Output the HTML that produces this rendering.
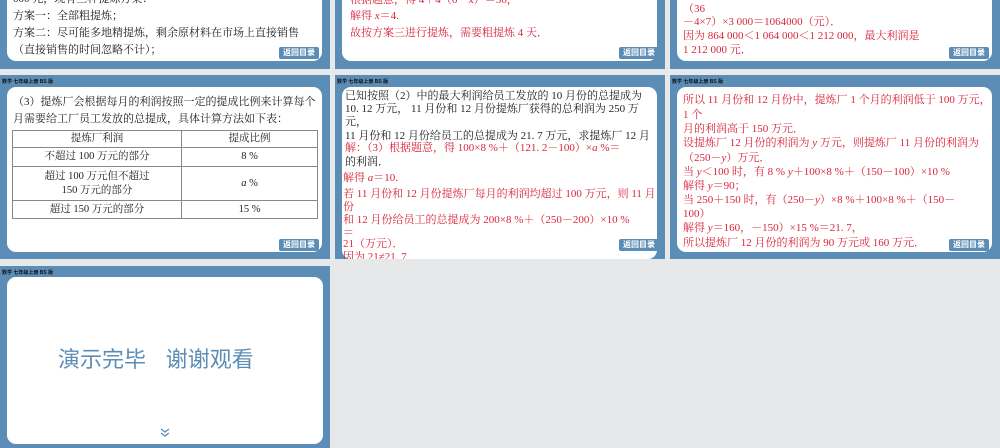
<!DOCTYPE html>
<html><head><meta charset="utf-8"><style>
*{margin:0;padding:0;box-sizing:border-box}
body{width:1000px;height:448px;background:#e7e8ea;position:relative;overflow:hidden;font-family:"Liberation Serif","Noto Serif CJK SC",serif}
.s{position:absolute;background:#5b8db6;overflow:hidden}
.p{position:absolute;background:#fff;border-radius:9px;overflow:hidden}
.h{position:absolute;left:2px;font:bold 5px "Liberation Sans","Noto Sans CJK SC",sans-serif;color:#111;white-space:nowrap}
.t{position:absolute;font-size:11px;line-height:13px;white-space:nowrap;color:#222}
.r{color:#d8263a}
.b{position:absolute;background:#5b8db6;color:#fff;font:bold 8px "Noto Sans CJK SC",sans-serif;width:40px;height:12px;line-height:12px;text-align:center;border-radius:2px}
table{border-collapse:collapse;font-size:10.5px;color:#222}
td{border:1px solid #888;text-align:center;line-height:14px}
</style></head><body>

<div class="s" style="left:0;top:0;width:330px;height:69px">
 <div class="p" style="left:7px;top:-10px;width:315px;height:71px"></div>
 <div class="t" style="left:13px;top:-7px">000 元，现有三种提炼方案：</div>
 <div class="t" style="left:13px;top:10px">方案一：全部粗提炼；</div>
 <div class="t" style="left:13px;top:27px">方案二：尽可能多地精提炼，剩余原材料在市场上直接销售</div>
 <div class="t" style="left:13px;top:44px">（直接销售的时间忽略不计）；</div>
 <div class="b" style="left:279px;top:47px">返回目录</div>
</div>
<div class="s" style="left:335px;top:0;width:330px;height:69px">
 <div class="p" style="left:7px;top:-10px;width:315px;height:71px"></div>
 <div class="t r" style="left:15px;top:-6px">根据题意，得 4＋4（6－x）＝36，</div>
 <div class="t r" style="left:15px;top:10px">解得 <i>x</i>＝4.</div>
 <div class="t r" style="left:15px;top:27px">故按方案三进行提炼，需要粗提炼 4 天．</div>
 <div class="b" style="left:284px;top:47px">返回目录</div>
</div>
<div class="s" style="left:670px;top:0;width:330px;height:69px">
 <div class="p" style="left:7px;top:-10px;width:315px;height:71px"></div>
 <div class="t r" style="left:13px;top:3px">（36</div>
 <div class="t r" style="left:13px;top:16px">－4×7）×3 000＝1064000（元）．</div>
 <div class="t r" style="left:13px;top:30px">因为 864 000＜1 064 000＜1 212 000，最大利润是</div>
 <div class="t r" style="left:13px;top:44px">1 212 000 元．</div>
 <div class="b" style="left:279px;top:47px">返回目录</div>
</div>

<div class="s" style="left:0;top:75px;width:330px;height:184px">
 <div class="h" style="top:3px">数学 七年级上册 BS 版</div>
 <div class="p" style="left:7px;top:12px;width:315px;height:165px"></div>
 <div class="t" style="left:13px;top:21px">（3）提炼厂会根据每月的利润按照一定的提成比例来计算每个</div>
 <div class="t" style="left:13px;top:38px">月需要给工厂员工发放的总提成，具体计算方法如下表：</div>
 <table style="position:absolute;left:12px;top:55px;width:306px">
  <tr><td style="width:169px;height:17px">提炼厂利润</td><td>提成比例</td></tr>
  <tr><td style="height:19px">不超过 100 万元的部分</td><td>8 %</td></tr>
  <tr><td style="height:34px">超过 100 万元但不超过<br>150 万元的部分</td><td><i>a</i> %</td></tr>
  <tr><td style="height:18px">超过 150 万元的部分</td><td>15 %</td></tr>
 </table>
 <div class="b" style="left:279px;top:164px">返回目录</div>
</div>
<div class="s" style="left:335px;top:75px;width:330px;height:184px">
 <div class="h" style="top:3px">数学 七年级上册 BS 版</div>
 <div class="p" style="left:7px;top:12px;width:315px;height:172px"></div>
 <div class="t" style="left:10px;top:15px">已知按照（2）中的最大利润给员工发放的 10 月份的总提成为</div>
 <div class="t" style="left:10px;top:28px">10. 12 万元， 11 月份和 12 月份提炼厂获得的总利润为 250 万</div>
 <div class="t" style="left:10px;top:41px">元，</div>
 <div class="t" style="left:10px;top:55px">11 月份和 12 月份给员工的总提成为 21. 7 万元，求提炼厂 12 月</div>
 <div class="t r" style="left:10px;top:67px">解：（3）根据题意，得 100×8 %＋（121. 2－100）×<i>a</i> %＝</div>
 <div class="t" style="left:10px;top:81px">的利润．</div>
 <div class="t r" style="left:8px;top:97px">解得 <i>a</i>＝10.</div>
 <div class="t r" style="left:8px;top:113px">若 11 月份和 12 月份提炼厂每月的利润均超过 100 万元，则 11 月</div>
 <div class="t r" style="left:8px;top:126px">份</div>
 <div class="t r" style="left:8px;top:139px">和 12 月份给员工的总提成为 200×8 %＋（250－200）×10 %</div>
 <div class="t r" style="left:8px;top:152px">＝</div>
 <div class="t r" style="left:8px;top:163px">21（万元）．</div>
 <div class="t r" style="left:8px;top:176px">因为 21≠21. 7，</div>
 <div class="b" style="left:284px;top:164px">返回目录</div>
</div>
<div class="s" style="left:670px;top:75px;width:330px;height:184px">
 <div class="h" style="top:3px">数学 七年级上册 BS 版</div>
 <div class="p" style="left:7px;top:12px;width:315px;height:165px"></div>
 <div class="t r" style="left:13px;top:19px">所以 11 月份和 12 月份中，提炼厂 1 个月的利润低于 100 万元，</div>
 <div class="t r" style="left:13px;top:34px">1 个</div>
 <div class="t r" style="left:13px;top:48px">月的利润高于 150 万元．</div>
 <div class="t r" style="left:13px;top:62px">设提炼厂 12 月份的利润为 <i>y</i> 万元，则提炼厂 11 月份的利润为</div>
 <div class="t r" style="left:13px;top:77px">（250－<i>y</i>）万元．</div>
 <div class="t r" style="left:13px;top:91px">当 <i>y</i>＜100 时，有 8 % <i>y</i>＋100×8 %＋（150－100）×10 %</div>
 <div class="t r" style="left:13px;top:105px">解得 <i>y</i>＝90；</div>
 <div class="t r" style="left:13px;top:119px">当 250＋150 时，有（250－<i>y</i>）×8 %＋100×8 %＋（150－</div>
 <div class="t r" style="left:13px;top:133px">100）</div>
 <div class="t r" style="left:13px;top:147px">解得 <i>y</i>＝160，－150）×15 %＝21. 7，</div>
 <div class="t r" style="left:13px;top:162px">所以提炼厂 12 月份的利润为 90 万元或 160 万元．</div>
 <div class="b" style="left:279px;top:164px">返回目录</div>
</div>

<div class="s" style="left:0;top:266px;width:330px;height:182px">
 <div class="h" style="top:3px">数学 七年级上册 BS 版</div>
 <div class="p" style="left:7px;top:11px;width:316px;height:167px"></div>
 <div style="position:absolute;left:58px;top:76px;font:22px 'Noto Sans CJK SC',sans-serif;color:#5b8db6;white-space:nowrap">演示完毕&nbsp;&nbsp;&nbsp;&nbsp;谢谢观看</div>
 <svg style="position:absolute;left:159px;top:161px" width="12" height="12" viewBox="0 0 12 12"><path d="M2 2l4 3 4-3M2 6l4 3 4-3" fill="none" stroke="#5b8db6" stroke-width="1.3"/></svg>
</div>
</body></html>
